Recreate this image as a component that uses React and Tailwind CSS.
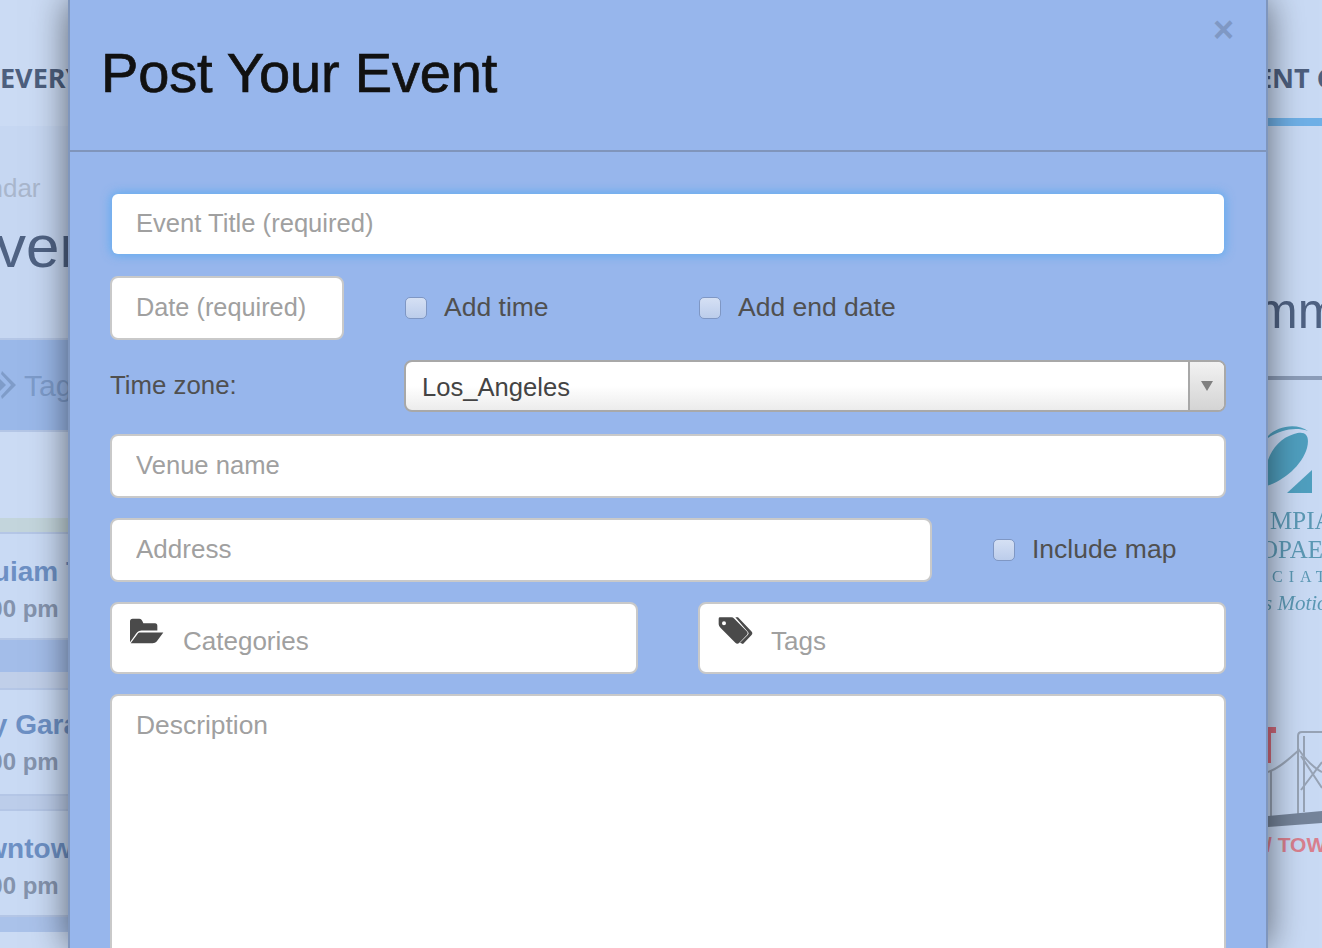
const font = { fontFamily: '"Liberation Sans", Arial, sans-serif' };

const inputClass =
  'h-16 w-full rounded-lg border-2 border-[#c9c9c9] bg-white px-6 pb-[2px] text-[25.6px] text-[#555] outline-none placeholder:text-[#a0a0a0]';

const Check = ({ label }) => (
  <label className="flex items-center gap-[17px] text-[26.5px] text-[#505050]">
    <input
      type="checkbox"
      className="h-[22px] w-[22px] appearance-none rounded-[5px] border border-[#7f97c4] bg-gradient-to-b from-[#d5e0f4] to-[#bccdeb]"
    />
    {label}
  </label>
);

const FolderIcon = () => (
  <svg width="34" height="26" viewBox="90 85 102 77" className="mt-[14px] block text-[#4a4a4a]" fill="currentColor">
    <path d="M90 95 Q90 87 98 87 H118 Q125 87 130 100 H165 Q172 100 172 108 V122 H125 Q115 122 108 132 L90 157 Z" />
    <path d="M118 128 H190 L170 155 Q166 160 158 160 H92 L112 133 Q114 128 118 128 Z" />
  </svg>
);

const TagsIcon = () => (
  <svg width="36" height="30" viewBox="20 20 108 90" className="mt-[12px] block text-[#4a4a4a]" fill="currentColor">
    <path
      fillRule="evenodd"
      d="M26 24 H60 Q65 24 69 28 L106 66 Q112 72 106 78 L84 100 Q78 106 72 100 L28 56 Q22 50 22 45 V28 Q22 24 26 24 Z M38 36 A6 6 0 1 0 38 48 A6 6 0 1 0 38 36 Z"
    />
    <path d="M72 24 H80 L120 66 Q126 72 120 78 L95 104 L86 100 L110 76 Q114 72 110 68 Z" />
  </svg>
);

const IconField = ({ icon, placeholder }) => (
  <div className="flex h-[72px] w-[528px] items-start rounded-lg border-2 border-[#c9c9c9] bg-white pl-[18px]">
    <span className="w-[53px] shrink-0">{icon}</span>
    <input
      placeholder={placeholder}
      className="mt-[13px] h-[48px] flex-1 text-[26px] outline-none placeholder:text-[#a0a0a0]"
    />
  </div>
);

const LeftRow = ({ title, titleMl, pt }) => (
  <div className={`h-[108px] border-y-2 border-[#b4c6e6] bg-[#c9daf4] whitespace-nowrap font-bold ${pt}`}>
    <div className={`text-[28px] leading-8 text-[#6d90c4] ${titleMl}`}>{title}</div>
    <div className="ml-[-32px] mt-[7px] text-[24px] leading-7 text-[#8493ad]">7:00 pm</div>
  </div>
);

const Left = () => (
  <div className="w-[68px] shrink-0 overflow-hidden">
    <div
      className="h-[126px] bg-[#cbdbf4] pt-[60px] text-[27px] leading-9 font-bold whitespace-nowrap text-[#4d5f7e]"
      style={{ fontFamily: '"Open Sans", sans-serif' }}
    >
      EVERY
    </div>
    <div className="h-[212px] overflow-hidden bg-[#c6d7f2] pt-[48px] whitespace-nowrap">
      <div className="ml-[-65px] text-[26px] leading-7 text-[#a9b6cc]">Calendar</div>
      <div className="ml-[-44px] mt-[11px] text-[60px] leading-[68px] text-[#4f6283]">Event</div>
    </div>
    <div className="flex h-[94px] items-center gap-[2px] border-y-2 border-[#b4c6e6] bg-[#9ab8e9] whitespace-nowrap">
      <svg width="16" height="32" viewBox="0 0 16 32" className="shrink-0 text-[#7f9cc9]" fill="currentColor">
        <path d="M-4 6 L6 16 L-4 26 Z" />
        <path d="M2 2 L16 16 L2 30 L1 27 L11 16 L1 5 Z" />
      </svg>
      <span className="ml-[6px] text-[30px] text-[#7d9bca]">Tags</span>
    </div>
    <div className="h-[86px] bg-[#cbdbf4]" />
    <div className="h-[14px] bg-[#c3d5dc]" />
    <LeftRow title="Squiam Tribe" titleMl="ml-[-43px]" pt="pt-[22px]" />
    <div className="h-[32px] bg-[#a3bde9]" />
    <div className="h-[16px] bg-[#c0cfe9]" />
    <LeftRow title="Bay Garage" titleMl="ml-[-44px]" pt="pt-[19px]" />
    <div className="h-[13px] bg-[#bccdea]" />
    <LeftRow title="Downtown" titleMl="ml-[-52px]" pt="pt-[22px]" />
    <div className="h-[15px] bg-[#aac2ea]" />
    <div className="h-[30px] bg-[#cbdbf4]" />
  </div>
);

const Right = () => (
  <div className="w-[54px] shrink-0 overflow-hidden bg-[#c9daf4]">
    <div
      className="ml-[-11px] h-[118px] pt-[60px] text-[27px] leading-9 font-bold whitespace-nowrap text-[#4d5f7e]"
      style={{ fontFamily: '"Open Sans", sans-serif' }}
    >
      ENT CAL
    </div>
    <div className="h-[8px] bg-[#6fb0e7]" />
    <div className="h-[250px] pt-[153px]">
      <div className="ml-[-12px] text-[50px] leading-[64px] whitespace-nowrap text-[#4f6283]">mmunity</div>
    </div>
    <div className="h-[4px] bg-[#8c9db9]" />
    <div className="h-[46px]" />
    <svg width="54" height="72" viewBox="0 0 54 72" className="block blur-[0.5px]" fill="#4f9fbf">
      <path d="M-2 60 C-6 36 6 14 26 8 C38 4 42 10 39 22 C34 40 14 56 -2 60 Z" />
      <path d="M0 10 C10 -1 30 -3 40 5 C28 1 14 3 0 12 Z" />
      <path d="M19 67 L44 44 V67 Z" />
    </svg>
    <div
      className="h-[202px] overflow-hidden pt-[8px] whitespace-nowrap text-[#5b98b4] blur-[0.3px]"
      style={{ fontFamily: '"Liberation Serif", serif' }}
    >
      <div className="ml-[2px] text-[25px] leading-[29px]">MPIA</div>
      <div className="ml-[-8px] text-[25px] leading-[29px]">OPAE</div>
      <div className="ml-[4px] text-[16px] leading-[26px] tracking-[6px]">CIAT</div>
      <div className="ml-[-4px] mt-[2px] text-[21px] leading-[22px] italic">s Motion</div>
    </div>
    <svg width="54" height="130" viewBox="0 0 54 130" className="block blur-[0.5px]">
      <path d="M0 27 H8 V33 H3 V63 H0 Z" fill="#d26a7c" />
      <g fill="none" stroke="#97a3b5" strokeWidth="2">
        <path d="M0 72 C12 68 22 58 31 50 C38 60 46 68 54 72" />
        <path d="M54 32 H34 Q30 32 30 36 V114 M36 36 V112 M3 70 V116 M33 56 L54 88 M33 90 L54 62" />
      </g>
      <path d="M0 116 L54 111 V123 L0 127 Z" fill="#75849a" />
    </svg>
    <div className="ml-[-2px] mt-[3px] text-[21px] leading-6 font-bold whitespace-nowrap text-[#d9808f]">/ TOWN</div>
  </div>
);

const Modal = () => (
  <div className="relative z-10 h-[948px] w-[1200px] shrink-0 overflow-hidden border-x-2 border-[#7f96bd] bg-[#97b6ec] shadow-[0_0_34px_rgba(0,0,0,0.55)]">
    <div className="relative h-[152px] border-b-2 border-[#8095bb] pt-[40px] pl-[31px]">
      <h1 className="text-[56px] leading-[66px] font-normal tracking-[-0.15px] text-[#111] [-webkit-text-stroke:0.7px_#111]">
        Post Your Event
      </h1>
      <span className="absolute top-[8px] right-[32px] text-[36px] leading-[44px] font-bold text-[#7f98c4]">×</span>
    </div>
    <div className="flex flex-col px-[40px] pt-[42px]">
      <input
        placeholder="Event Title (required)"
        className="mx-[2px] h-[60px] rounded-md bg-white px-6 pb-[2px] text-[25.6px] outline-none shadow-[0_0_10px_2px_rgba(92,170,240,0.85)] placeholder:text-[#a0a0a0]"
      />
      <div className="mt-[22px] flex h-16 items-center">
        <input placeholder="Date (required)" className={`${inputClass} !w-[234px] !text-[25.3px]`} />
        <div className="ml-[61px] w-[294px]">
          <Check label="Add time" />
        </div>
        <Check label="Add end date" />
      </div>
      <div className="mt-[20px] flex h-[52px] items-center">
        <span className="w-[294px] pb-[2px] text-[25.8px] text-[#505050]">Time zone:</span>
        <div className="flex h-full flex-1 overflow-hidden rounded-lg border-2 border-[#a8a8a8] bg-gradient-to-b from-white from-50% to-[#ececec]">
          <span className="flex-1 pt-[9px] pl-[16px] text-[25.6px] leading-8 text-[#444]">Los_Angeles</span>
          <span className="flex w-[36px] items-center justify-center border-l-2 border-[#a8a8a8] bg-gradient-to-b from-[#f2f2f2] to-[#d4d4d4]">
            <span className="h-0 w-0 border-x-[6px] border-t-[10px] border-x-transparent border-t-[#808080]" />
          </span>
        </div>
      </div>
      <input placeholder="Venue name" className={`${inputClass} mt-[22px]`} />
      <div className="mt-[20px] flex items-center">
        <input placeholder="Address" className={`${inputClass} !w-[822px] !text-[26px]`} />
        <div className="ml-[61px]">
          <Check label="Include map" />
        </div>
      </div>
      <div className="mt-[20px] flex justify-between">
        <IconField icon={<FolderIcon />} placeholder="Categories" />
        <IconField icon={<TagsIcon />} placeholder="Tags" />
      </div>
      <textarea
        placeholder="Description"
        className="mt-[20px] h-[300px] resize-none rounded-lg border-2 border-[#c9c9c9] bg-white px-6 pt-[13px] text-[26.4px] leading-8 outline-none placeholder:text-[#a0a0a0]"
      />
    </div>
  </div>
);

export default function App() {
  return (
    <div className="flex h-[948px] w-[1322px] overflow-hidden bg-[#c9daf4]" style={font}>
      <Left />
      <Modal />
      <Right />
    </div>
  );
}
